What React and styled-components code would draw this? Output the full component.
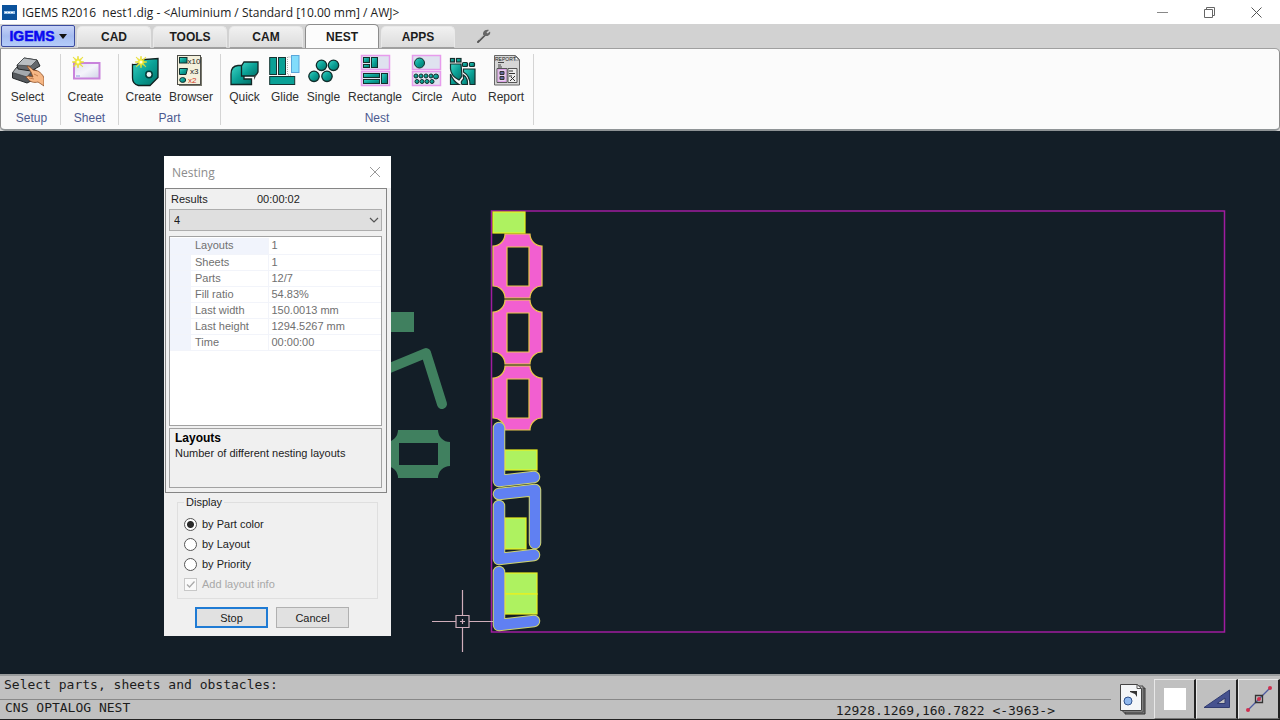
import React, { useState } from 'react'
import styled, { createGlobalStyle } from 'styled-components'

const GlobalStyle = createGlobalStyle`
  * {
    box-sizing: border-box;
  }

  body {
    margin: 0;
    background: #131e27;
    font-family: "Liberation Sans", Arial, sans-serif;
    font-size: 11px;
    color: #1c1c1c;
  }

  button, select, input {
    font: inherit;
    color: inherit;
    margin: 0;
  }

  svg {
    display: block;
    flex: none;
  }
`

const Window = styled.div`
  display: flex;
  flex-direction: column;
  min-height: 100vh;
`

const TitleBar = styled.header`
  display: flex;
  align-items: center;
  justify-content: space-between;
  height: 24px;
  background: #fff;
`

const Title = styled.h1`
  display: flex;
  align-items: center;
  gap: 5px;
  margin: 0;
  padding-left: 2px;
  font: 12px "Open Sans", sans-serif;
  white-space: pre;
`

const WindowControls = styled.div`
  display: flex;
`

const WindowButton = styled.button`
  display: flex;
  align-items: center;
  justify-content: center;
  width: 47px;
  height: 24px;
  padding: 0;
  border: 0;
  background: none;
`

const TabBar = styled.nav`
  display: flex;
  align-items: flex-end;
  gap: 2px;
  height: 24px;
  padding-left: 1px;
  background: #d2d2d2;
`

const AppButton = styled.button`
  display: flex;
  align-items: center;
  justify-content: center;
  gap: 4px;
  width: 74px;
  height: 22px;
  margin-bottom: 1px;
  padding: 0;
  border: 1px solid #3b4ba0;
  border-radius: 2px;
  background: linear-gradient(#c6d2f6, #a6bcf0 50%, #b4ccfa);
  color: #0a0af0;
  font-size: 14px;
  font-weight: 900;
  -webkit-text-stroke: 0.5px #0a0af0;
`

const Tab = styled.button`
  width: 74px;
  height: ${(props) => (props.$active ? '24px' : '22px')};
  padding: 0;
  border: 1px solid ${(props) => (props.$active ? '#8c8c8c' : '#e9e9e9')};
  border-bottom: ${(props) => (props.$active ? '0' : '1px solid #a0a0a0')};
  border-radius: 5px 5px 0 0;
  background: ${(props) => (props.$active ? '#fcfcfc' : 'linear-gradient(#f1f1f1, #dcdcdc)')};
  font-size: 12px;
  font-weight: bold;
`

const ToolTab = styled.button`
  display: flex;
  align-items: center;
  height: 24px;
  margin-left: 20px;
  padding: 0;
  border: 0;
  background: none;
`

const RibbonBack = styled.div`
  background: #d2d2d2;
`

const Ribbon = styled.section`
  display: flex;
  height: 83px;
  padding: 5px 0 4px 2px;
  border: 1px solid #8c8c8c;
  border-top-color: #a0a0a0;
  border-bottom: 2px solid #8f9496;
  border-radius: 0 5px 5px 5px;
  background: #fbfbfb;
`

const Group = styled.div`
  display: flex;
  flex-direction: column;
  justify-content: space-between;
  min-width: 58px;
  border-right: 1px solid #d4d4d4;
`

const GroupTools = styled.div`
  display: flex;
`

const GroupName = styled.div`
  color: #4c5a90;
  font-size: 12px;
  line-height: 14px;
  text-align: center;
`

const Tool = styled.button`
  display: flex;
  flex-direction: column;
  align-items: center;
  gap: 2px;
  width: ${(props) => props.$width}px;
  padding: 0;
  border: 0;
  background: none;
  color: #303030;
  font-size: 12px;
  line-height: 14px;
  white-space: nowrap;
`

const Workspace = styled.main`
  position: relative;
  flex: 1;
  display: flex;
  min-height: 520px;
  background: #131e27;
`

const Drawing = styled.svg`
  flex: 1;
  width: 100%;
`

const Dialog = styled.section`
  position: absolute;
  left: 164px;
  top: 25px;
  width: 227px;
  padding-bottom: 8px;
  background: #f0f0f0;
`

const DialogHead = styled.div`
  display: flex;
  align-items: center;
  justify-content: space-between;
  height: 32px;
  padding: 0 10px 0 8px;
  background: #fff;
`

const DialogTitle = styled.h2`
  margin: 0;
  color: #8c8c8c;
  font: 12px "Open Sans", sans-serif;
`

const CloseButton = styled.button`
  padding: 0;
  border: 0;
  background: none;
`

const ResultsPanel = styled.div`
  display: flex;
  flex-direction: column;
  margin: 0 4px 0 1px;
  padding: 0 4px 4px 3px;
  border: 1px solid #858585;
`

const ResultsHead = styled.div`
  display: grid;
  grid-template-columns: 86px 1fr;
  align-items: center;
  height: 20px;
  padding-left: 2px;
`

const SelectBox = styled.div`
  position: relative;
  margin-bottom: 5px;

  select {
    display: block;
    appearance: none;
    width: 100%;
    height: 22px;
    padding: 0 4px;
    border: 1px solid #adadad;
    border-radius: 0;
    background: #dfdfdf;
  }

  svg {
    position: absolute;
    right: 3px;
    top: 7px;
    pointer-events: none;
  }
`

const PropertyGrid = styled.div`
  height: 190px;
  margin-bottom: 2px;
  padding-top: 1px;
  border: 1px solid #a2a2a2;
  background: #fff;
`

const PropertyTable = styled.table`
  width: 100%;
  border-collapse: collapse;
  color: #707070;

  th, td {
    height: 16px;
    padding: 0 0 0 3px;
    border-bottom: 1px solid #f2f4fa;
    font-weight: normal;
    line-height: 15px;
    text-align: left;
  }

  th {
    width: 98px;
    padding-left: 25px;
    border-right: 1px solid #f2f4fa;
    background: linear-gradient(90deg, #f1f4fc 21px, transparent 21px);
  }

  tr:first-child th {
    background: #f1f4fc;
  }
`

const Description = styled.div`
  height: 60px;
  padding: 2px 5px;
  border: 1px solid #a2a2a2;
  line-height: 15px;

  h3 {
    margin: 0;
    font-size: 12px;
    color: #000;
  }

  p {
    margin: 0;
  }
`

const DisplayOptions = styled.fieldset`
  display: flex;
  flex-direction: column;
  margin: 2px 13px 0;
  padding: 5px 6px 4px;
  border: 1px solid #dfdfdf;

  legend {
    margin-left: 0;
    padding: 0 2px;
    line-height: 14px;
  }
`

const Option = styled.label`
  display: flex;
  align-items: center;
  gap: 5px;
  height: 20px;
  color: ${(props) => (props.$disabled ? '#a8a8a8' : 'inherit')};
`

const Radio = styled.input`
  appearance: none;
  width: 13px;
  height: 13px;
  border: 1px solid #555;
  border-radius: 50%;
  background: #fff;

  &:checked {
    background: radial-gradient(#2a2a2a 3px, #fff 4px);
  }
`

const CheckBox = styled.span`
  display: grid;

  input, svg {
    grid-area: 1 / 1;
  }

  input {
    appearance: none;
    width: 13px;
    height: 13px;
    border: 1px solid #c8c8c8;
    background: #fafafa;
  }
`

const DialogButtons = styled.div`
  display: flex;
  justify-content: center;
  gap: 8px;
  margin-top: 8px;
  padding-right: 11px;
`

const DialogButton = styled.button`
  width: 73px;
  height: 21px;
  padding: 0;
  border: ${(props) => (props.$primary ? '2px solid #1f7bd4' : '1px solid #b0b0b0')};
  background: #e1e1e1;
`

const StatusBar = styled.footer`
  display: flex;
  height: 46px;
  border-top: 2px solid #999c9d;
  border-bottom: 1px solid #222;
  background: #c0c0c0;
`

const StatusLines = styled.div`
  flex: 1;
  font: 13px "DejaVu Sans Mono", monospace;
`

const Prompt = styled.div`
  height: 23px;
  padding-left: 4px;
  line-height: 18px;
`

const CommandLine = styled.div`
  display: flex;
  justify-content: space-between;
  height: 20px;
  padding: 0 56px 0 5px;
  border-top: 1px solid #888;
  line-height: 16px;
`

const Coordinates = styled.span`
  align-self: flex-end;
`

const StatusTools = styled.div`
  display: flex;
  align-items: flex-end;
  padding-left: 1px;
`

const StatusButton = styled.button`
  display: flex;
  align-items: center;
  justify-content: center;
  width: 42px;
  height: 40px;
  padding: 0;
  border: ${(props) => (props.$flat ? '0' : '1px solid #e8e8e8')};
  border-right: ${(props) => (props.$flat ? '0' : '2px solid #222')};
  border-bottom-color: #777;
  background: none;
`

const teal = '#0aa196'

// Shared gradients, so that every icon can use them by id
const Gradients = () => (
  <svg width="0" height="0" style={{ position: 'absolute' }} aria-hidden="true">
    <defs>
      <linearGradient id="teal" x1="0" y1="0" x2="1" y2="1">
        <stop offset="0" stopColor="#3fd3c4" />
        <stop offset="0.5" stopColor={teal} />
        <stop offset="1" stopColor="#047168" />
      </linearGradient>
      <linearGradient id="sheet" x1="0" y1="0" x2="1" y2="1">
        <stop offset="0" stopColor="#dfe0ee" />
        <stop offset="0.5" stopColor="#f4f4fb" />
        <stop offset="1" stopColor="#cfd3e6" />
      </linearGradient>
    </defs>
  </svg>
)

const Icon = ({ children }) => (
  <svg width="32" height="34" viewBox="0 0 32 34" aria-hidden="true">{children}</svg>
)

const Spark = ({ x, y }) => (
  <g transform={`translate(${x} ${y})`}>
    <path
      d="M0-6L1-2 5-5 2-1 6 0 2 1 5 5 1 2 0 6-1 2-5 5-2 1-6 0-2-1-5-5-1-2z"
      fill="#f5ef2e"
      stroke="#e4d832"
      strokeWidth="0.6"
    />
    <circle r="1.5" fill="#fffde0" />
  </g>
)

const SelectIcon = () => (
  <Icon>
    <path d="M0.500 19L5 13 18 12 26 18 25 24 15 29 0.500 24z" fill="#55595d" stroke="#25282a" />
    <path d="M0.500 18.500L5 13 20 17 15 23z" fill="#a4a9ad" stroke="#3b3e40" strokeWidth="0.700" />
    <path d="M5 11L12 4 25 6 28 12 19 17 6 15z" fill="#64686c" stroke="#25282a" />
    <path d="M5 11L12 4 25 6 19 12z" fill="#b9bec2" stroke="#3b3e40" strokeWidth="0.700" />
    <path d="M15 12c2 0 4 2 6 4l5 1c3 2 5 4 6 7v8l-6-4c-4 1-8 0-10-3l-2-2 2-1 5 1-2-5z" fill="#f6b785" stroke="#8b4b22" strokeWidth="0.800" />
    <path d="M22 20l4 2M17 24l5 1" stroke="#b56f3d" strokeWidth="0.800" />
  </Icon>
)

const SheetIcon = () => (
  <Icon>
    <rect x="4" y="9" width="25.500" height="15.500" fill="url(#sheet)" stroke="#c983dc" strokeWidth="2" />
    <path d="M6 22h4" stroke="#8c9be0" />
    <Spark x={8} y={8} />
  </Icon>
)

const PartIcon = () => (
  <Icon>
    <path d="M4.500 10.500Q12 11 15 5.500L30 4.500V23.500L22 31.500H10.500Q4.500 30 4.500 24z" fill="url(#teal)" stroke="#10201f" strokeWidth="1.300" />
    <circle cx="21" cy="20.500" r="3.200" fill="#f5fafa" stroke="#053b38" strokeWidth="1.500" />
    <Spark x={13} y={8} />
  </Icon>
)

const BrowserIcon = () => (
  <Icon>
    <path d="M4 3h23v29H4z" fill="#77776c" />
    <rect x="2.500" y="1.500" width="23" height="29" fill="#f3f0dc" stroke="#4d4d48" />
    <rect x="4.500" y="3.500" width="7.500" height="5.500" fill="url(#teal)" stroke="#12302e" />
    <path d="M4.500 14.500h8l-1.500 6H4.500z" fill="url(#teal)" stroke="#12302e" />
    <ellipse cx="7.700" cy="26" rx="3" ry="2.400" fill="url(#teal)" stroke="#12302e" />
    <g fontFamily="Liberation Sans, sans-serif" fontSize="8">
      <text x="12.500" y="10" fill="#222">x10</text>
      <text x="15" y="20" fill="#222">x3</text>
      <text x="13" y="29" fill="#d2371e">x2</text>
    </g>
  </Icon>
)

const QuickIcon = () => (
  <Icon>
    <path d="M2 30.500V20Q2 12 9 11.500H15V25H22.500V30.500z" fill="url(#teal)" stroke="#122625" strokeWidth="1.300" />
    <path d="M15 8H29V18Q28 21 25 22H12.500V12z" fill="url(#teal)" stroke="#122625" strokeWidth="1.300" />
    <path d="M25 26v-4l3-2z" fill="#444" />
  </Icon>
)

const GlideIcon = () => (
  <Icon>
    <rect x="0.700" y="3.500" width="6.800" height="17" fill={teal} stroke="#163331" />
    <rect x="9.500" y="3.500" width="7" height="17" fill={teal} stroke="#163331" />
    <rect x="0.700" y="22.500" width="25" height="8" fill={teal} stroke="#163331" />
    <path d="M18.500 20V3h4M22 21h-3" fill="none" stroke="#aaa" strokeDasharray="1 1" />
    <rect x="22.500" y="1.500" width="7.500" height="17" fill="#82dcfb" stroke="#5aa6da" />
  </Icon>
)

const SingleIcon = () => (
  <Icon>
    {[[13.5, 11.3], [25.5, 11.3], [6, 22.3], [19, 22.3]].map(([cx, cy]) => (
      <circle key={`${cx}-${cy}`} cx={cx} cy={cy} r="5.200" fill="url(#teal)" stroke="#102d2b" strokeWidth="1.300" />
    ))}
  </Icon>
)

const RectangleIcon = () => (
  <Icon>
    <rect x="2.500" y="1.500" width="28" height="14" fill="#dfe2ef" stroke="#e79bec" strokeWidth="1.500" />
    <rect x="2.500" y="17.500" width="28" height="14" fill="#dfe2ef" stroke="#e79bec" strokeWidth="1.500" />
    <g fill="url(#teal)" stroke="#152f2d">
      <rect x="4.500" y="3.500" width="6" height="5" />
      <rect x="4.500" y="10.500" width="6" height="3" />
      <rect x="12.500" y="3.500" width="6" height="10" />
      <rect x="4.500" y="19.500" width="16" height="4" />
      <rect x="4.500" y="25.500" width="16" height="4" />
      <rect x="22.500" y="19.500" width="6" height="10" />
    </g>
  </Icon>
)

const CircleIcon = () => (
  <Icon>
    <rect x="1.500" y="1.500" width="28" height="14" fill="#dfe2ef" stroke="#e79bec" strokeWidth="1.500" />
    <rect x="1.500" y="17.500" width="28" height="14" fill="#dfe2ef" stroke="#e79bec" strokeWidth="1.500" />
    <g fill="url(#teal)" stroke="#152f2d">
      <circle cx="8.500" cy="9" r="5" />
      {[5, 10, 15, 20].map((x) => <circle key={x} cx={x} cy="22" r="2" />)}
      <circle cx="25" cy="22.500" r="2.500" />
      {[6, 11, 16, 21].map((x) => <circle key={x} cx={x} cy="27.500" r="2" />)}
    </g>
  </Icon>
)

const AutoIcon = () => (
  <Icon>
    <g fill="url(#teal)" stroke="#152f2d" strokeWidth="1.200">
      <rect x="2.500" y="4.500" width="4" height="3.500" />
      <rect x="8.500" y="4.500" width="4.500" height="3.500" />
      <rect x="14.500" y="8.500" width="5" height="4" rx="1" />
      <rect x="21.500" y="8.500" width="5" height="4" rx="1" />
      <path d="M2.500 10H13L14 22 11 26Q3 22 2.500 15z" />
      <path d="M2.500 20Q5 27 11 30.500H2.500z" />
      <path d="M15.500 15H27V30.500H22Q22 22 15.500 18z" />
      <path d="M15.500 21Q20 24 19.500 30.500H14Q12 28 15.500 25z" />
    </g>
  </Icon>
)

const ReportIcon = () => (
  <Icon>
    <path d="M4.500 1.500h21l4 4v25.500h-25z" fill="#d6d6d6" stroke="#666" />
    <path d="M25 2v4h4z" fill="#fff" stroke="#666" strokeWidth="0.700" />
    <text x="5" y="6.500" fontSize="5" fontFamily="Liberation Sans, sans-serif" fill="#222">REPORT</text>
    <path d="M8 8.500h6M8 11h3M8 13h4" stroke="#444" />
    <path d="M7 14.500h10v14H7zM18 14.500h9v14h-9z" fill="#ededed" stroke="#555" />
    <path d="M8 15.500h8v12H8z" fill="#e8d3f0" stroke="#d68ae2" strokeWidth="0.700" />
    <path d="M10 17.500h4v3h-4zM10 22.500h4v3h-4z" fill="#5f689f" stroke="#333" />
    <path d="M19 17h4M19 19.500h6M19 22h3M20 27l5-5M21 23l4 4" stroke="#333" />
  </Icon>
)

const groups = [
  { name: 'Setup', tools: [{ label: 'Select', width: 49, icon: SelectIcon }] },
  { name: 'Sheet', tools: [{ label: 'Create', width: 49, icon: SheetIcon }] },
  {
    name: 'Part',
    tools: [
      { label: 'Create', width: 49, icon: PartIcon },
      { label: 'Browser', width: 46, icon: BrowserIcon },
    ],
  },
  {
    name: 'Nest',
    tools: [
      { label: 'Quick', width: 47, icon: QuickIcon },
      { label: 'Glide', width: 34, icon: GlideIcon },
      { label: 'Single', width: 43, icon: SingleIcon },
      { label: 'Rectangle', width: 60, icon: RectangleIcon },
      { label: 'Circle', width: 44, icon: CircleIcon },
      { label: 'Auto', width: 30, icon: AutoIcon },
      { label: 'Report', width: 54, icon: ReportIcon },
    ],
  },
]

const tabs = ['CAD', 'TOOLS', 'CAM', 'NEST', 'APPS']

const results = [
  ['Layouts', '1'],
  ['Sheets', '1'],
  ['Parts', '12/7'],
  ['Fill ratio', '54.83%'],
  ['Last width', '150.0013 mm'],
  ['Last height', '1294.5267 mm'],
  ['Time', '00:00:00'],
]

const displayModes = ['by Part color', 'by Layout', 'by Priority']

const frameTops = [234, 300, 366]

const angles = [
  'M499 428L499 481 534 477',
  'M499 494L535 490 535 543',
  'M499 506L499 559 534 555',
  'M499 572L499 625 534 621',
]

const plates = [
  [493, 212, 32, 21],
  [505, 450, 32, 20],
  [505, 518, 21, 31],
  [505, 573, 32, 21],
  [505, 594, 32, 20],
]

const NestDrawing = () => (
  <Drawing viewBox="0 131 1280 543" preserveAspectRatio="xMinYMin meet" role="img" aria-label="Nested sheet">
    <g fill="#40805f">
      <rect x="384" y="312" width="30" height="20" />
      <path d="M380 372L426 353 442 404" fill="none" stroke="#40805f" strokeWidth="10" strokeLinecap="round" strokeLinejoin="round" />
      <path
        fillRule="evenodd"
        d="M398 430H438A12 12 0 0 0 450 442V466A12 12 0 0 0 438 478H398A12 12 0 0 0 386 466V442A12 12 0 0 0 398 430ZM399 443V465H438V443Z"
      />
    </g>
    <rect x="491.500" y="211" width="733" height="421" fill="none" stroke="#a01ca0" strokeWidth="1.500" />
    {frameTops.map((top) => (
      <path
        key={top}
        transform={`translate(493 ${top})`}
        fill="#f25fd0"
        fillRule="evenodd"
        stroke="#ecc84c"
        strokeWidth="1.200"
        d="M12 0H37A12 12 0 0 0 49 12V52A12 12 0 0 0 37 64H12A12 12 0 0 0 0 52V12A12 12 0 0 0 12 0ZM14 13V52H36V13Z"
      />
    ))}
    {plates.map(([x, y, width, height]) => (
      <rect key={y} x={x} y={y} width={width} height={height} fill="#aef260" stroke="#e9f01e" strokeWidth="1.200" />
    ))}
    {angles.map((d) => (
      <g key={d} fill="none" strokeLinecap="round" strokeLinejoin="round">
        <path d={d} stroke="#cfd36a" strokeWidth="12.500" />
        <path d={d} stroke="#6080f2" strokeWidth="10.500" />
      </g>
    ))}
    <path d="M432 621.500H456M469 621.500H493M462.500 590V615M462.500 628V652M456 615.500H469V627.500H456ZM460 621.500H465M462.500 619V624" fill="none" stroke="#d0aebb" strokeWidth="1.200" />
  </Drawing>
)

const NestingDialog = () => {
  const [mode, setMode] = useState(displayModes[0])

  return (
    <Dialog role="dialog" aria-labelledby="nesting-title">
      <DialogHead>
        <DialogTitle id="nesting-title">Nesting</DialogTitle>
        <CloseButton aria-label="Close">
          <svg width="12" height="12" viewBox="0 0 12 12"><path d="M1 1l10 10M11 1L1 11" stroke="#999" /></svg>
        </CloseButton>
      </DialogHead>
      <ResultsPanel>
        <ResultsHead>
          <label htmlFor="results">Results</label>
          <span>00:00:02</span>
        </ResultsHead>
        <SelectBox>
          <select id="results" defaultValue="4">
            <option>4</option>
          </select>
          <svg width="10" height="8" viewBox="0 0 10 8"><path d="M1 2l4 4 4-4" fill="none" stroke="#555" strokeWidth="1.200" /></svg>
        </SelectBox>
        <PropertyGrid>
          <PropertyTable>
            <tbody>
              {results.map(([name, value]) => (
                <tr key={name}>
                  <th scope="row">{name}</th>
                  <td>{value}</td>
                </tr>
              ))}
            </tbody>
          </PropertyTable>
        </PropertyGrid>
        <Description>
          <h3>Layouts</h3>
          <p>Number of different nesting layouts</p>
        </Description>
      </ResultsPanel>
      <DisplayOptions>
        <legend>Display</legend>
        {displayModes.map((name) => (
          <Option key={name}>
            <Radio type="radio" name="display" checked={mode === name} onChange={() => setMode(name)} />
            {name}
          </Option>
        ))}
        <Option $disabled>
          <CheckBox>
            <input type="checkbox" defaultChecked disabled />
            <svg width="13" height="13" viewBox="0 0 13 13"><path d="M3 6.500l2.500 2.500L10.500 3.500" fill="none" stroke="#aaa" strokeWidth="1.300" /></svg>
          </CheckBox>
          Add layout info
        </Option>
      </DisplayOptions>
      <DialogButtons>
        <DialogButton $primary>Stop</DialogButton>
        <DialogButton>Cancel</DialogButton>
      </DialogButtons>
    </Dialog>
  )
}

const App = () => {
  const [activeTab, setActiveTab] = useState('NEST')

  return (
    <Window>
      <GlobalStyle />
      <Gradients />
      <TitleBar>
        <Title>
          <svg width="15" height="15" viewBox="0 0 15 15" aria-hidden="true">
            <rect width="15" height="15" fill="#0b529c" />
            <path d="M2 6h11v3H2z" fill="#9cc3e8" />
            <path d="M3 7.500h9" stroke="#fff" strokeDasharray="2 1" />
          </svg>
          {'IGEMS R2016  nest1.dig - <Aluminium / Standard [10.00 mm] / AWJ>'}
        </Title>
        <WindowControls>
          <WindowButton aria-label="Minimize">
            <svg width="11" height="11" viewBox="0 0 11 11"><path d="M0 5.500h11" stroke="#888" /></svg>
          </WindowButton>
          <WindowButton aria-label="Restore">
            <svg width="11" height="11" viewBox="0 0 11 11">
              <path d="M0.500 2.500h8v8h-8zM2.500 2.500v-2h8v8h-2" fill="none" stroke="#666" />
            </svg>
          </WindowButton>
          <WindowButton aria-label="Close">
            <svg width="11" height="11" viewBox="0 0 11 11"><path d="M0.500 0.500l10 10M10.500 0.500l-10 10" stroke="#555" /></svg>
          </WindowButton>
        </WindowControls>
      </TitleBar>
      <TabBar>
        <AppButton>
          IGEMS
          <svg width="8" height="5" viewBox="0 0 8 5"><path d="M0 0h8L4 5z" fill="#111" /></svg>
        </AppButton>
        {tabs.map((name) => (
          <Tab key={name} $active={name === activeTab} onClick={() => setActiveTab(name)}>{name}</Tab>
        ))}
        <ToolTab aria-label="Settings">
          <svg width="14" height="14" viewBox="0 0 14 14">
            <path d="M1 13l7-7" stroke="#555" strokeWidth="2" strokeLinecap="round" />
            <path d="M12 1L9.500 3.500l1 1L13 2.500c1 2-1 5-4 4.500L6.500 6.500C5 4 7 0 12 1z" fill="#666" />
            <path d="M2 11l5-5" stroke="#bbb" strokeWidth="0.700" />
          </svg>
        </ToolTab>
      </TabBar>
      <RibbonBack>
        <Ribbon>
          {groups.map((group) => (
            <Group key={group.name}>
              <GroupTools>
                {group.tools.map(({ label, width, icon: ToolIcon }) => (
                  <Tool key={label} $width={width}>
                    <ToolIcon />
                    {label}
                  </Tool>
                ))}
                {group.name === 'Part' && <Tool as="span" $width={6} />}
              </GroupTools>
              <GroupName>{group.name}</GroupName>
            </Group>
          ))}
        </Ribbon>
      </RibbonBack>
      <Workspace>
        <NestDrawing />
        <NestingDialog />
      </Workspace>
      <StatusBar>
        <StatusLines>
          <Prompt>Select parts, sheets and obstacles:</Prompt>
          <CommandLine>
            <span>CNS OPTALOG NEST</span>
            <Coordinates>{'12928.1269,160.7822 <-3963->'}</Coordinates>
          </CommandLine>
        </StatusLines>
        <StatusTools>
          <StatusButton $flat aria-label="Drawing sheets">
            <svg width="28" height="32" viewBox="0 0 28 32">
              <path d="M5 5h21v26H6z" fill="#777" stroke="#333" />
              <path d="M3 3h21v26H4z" fill="#bbb" stroke="#444" />
              <path d="M1.500 1.500h17l4 4v22h-21z" fill="#f4f6f8" stroke="#444" />
              <path d="M18 1.500v4h4.500z" fill="#fff" stroke="#555" />
              <circle cx="9" cy="18" r="4" fill="#8fb8ee" stroke="#31528c" />
              <path d="M11 8h7v6l-2-3-5-2z" fill="#333" />
            </svg>
          </StatusButton>
          <StatusButton aria-label="Color">
            <svg width="22" height="22" viewBox="0 0 22 22"><path d="M0 0h22v22H0z" fill="#fff" /></svg>
          </StatusButton>
          <StatusButton aria-label="Ortho">
            <svg width="28" height="20" viewBox="0 0 28 20">
              <path d="M1 18.500L26.500 1V18.500zM14 14.500H22V9z" fill="#46528f" fillRule="evenodd" stroke="#303b70" />
            </svg>
          </StatusButton>
          <StatusButton aria-label="Snap">
            <svg width="28" height="28" viewBox="0 0 28 28">
              <path d="M3 25L25 3" stroke="#4c5aa0" strokeWidth="1.300" />
              <path d="M10.500 10.500h7v7h-7z" fill="none" stroke="#333" strokeWidth="1.300" />
              <circle cx="3" cy="25" r="2" fill="#cf2f4e" />
              <circle cx="25" cy="3" r="2" fill="#cf2f4e" />
              <circle cx="14" cy="14" r="2" fill="#cf2f4e" />
            </svg>
          </StatusButton>
        </StatusTools>
      </StatusBar>
    </Window>
  )
}

export default App
